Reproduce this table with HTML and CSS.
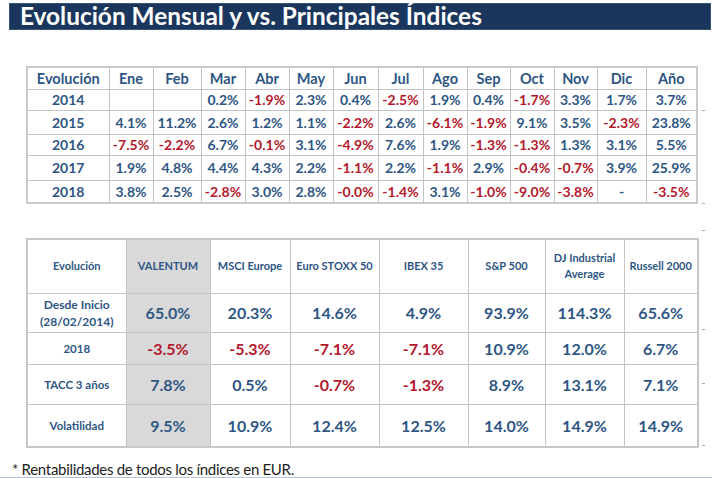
FILE: index.html
```html
<!DOCTYPE html>
<html lang="es">
<head>
<meta charset="utf-8">
<title>Evolución Mensual y vs. Principales Índices</title>
<link rel="stylesheet" href="styles.css">
</head>
<body>
<div class="page">
  <div class="title-bar"><h1 class="title">Evolución Mensual y vs. Principales Índices</h1></div>

  <table class="monthly">
    <colgroup>
      <col class="c-label"><col class="c44"><col class="c48"><col class="c44"><col class="c44"><col class="c44"><col class="c45"><col class="c45"><col class="c44"><col class="c43"><col class="c44"><col class="c43"><col class="c49"><col class="c50">
    </colgroup>
    <thead>
      <tr class="r-h"><th>Evolución</th><th>Ene</th><th>Feb</th><th>Mar</th><th>Abr</th><th>May</th><th>Jun</th><th>Jul</th><th>Ago</th><th>Sep</th><th>Oct</th><th>Nov</th><th>Dic</th><th>Año</th></tr>
    </thead>
    <tbody>
      <tr class="r1"><th>2014</th><td></td><td></td><td>0.2%</td><td class="neg">-1.9%</td><td>2.3%</td><td>0.4%</td><td class="neg">-2.5%</td><td>1.9%</td><td>0.4%</td><td class="neg">-1.7%</td><td>3.3%</td><td>1.7%</td><td>3.7%</td></tr>
      <tr class="r2"><th>2015</th><td>4.1%</td><td>11.2%</td><td>2.6%</td><td>1.2%</td><td>1.1%</td><td class="neg">-2.2%</td><td>2.6%</td><td class="neg">-6.1%</td><td class="neg">-1.9%</td><td>9.1%</td><td>3.5%</td><td class="neg">-2.3%</td><td>23.8%</td></tr>
      <tr class="r3"><th>2016</th><td class="neg">-7.5%</td><td class="neg">-2.2%</td><td>6.7%</td><td class="neg">-0.1%</td><td>3.1%</td><td class="neg">-4.9%</td><td>7.6%</td><td>1.9%</td><td class="neg">-1.3%</td><td class="neg">-1.3%</td><td>1.3%</td><td>3.1%</td><td>5.5%</td></tr>
      <tr class="r4"><th>2017</th><td>1.9%</td><td>4.8%</td><td>4.4%</td><td>4.3%</td><td>2.2%</td><td class="neg">-1.1%</td><td>2.2%</td><td class="neg">-1.1%</td><td>2.9%</td><td class="neg">-0.4%</td><td class="neg">-0.7%</td><td>3.9%</td><td>25.9%</td></tr>
      <tr class="r5"><th>2018</th><td>3.8%</td><td>2.5%</td><td class="neg">-2.8%</td><td>3.0%</td><td>2.8%</td><td class="neg">-0.0%</td><td class="neg">-1.4%</td><td>3.1%</td><td class="neg">-1.0%</td><td class="neg">-9.0%</td><td class="neg">-3.8%</td><td>-</td><td class="neg">-3.5%</td></tr>
    </tbody>
  </table>

  <table class="compare">
    <colgroup>
      <col class="k-label"><col class="k-val"><col class="k-msci"><col class="k-stoxx"><col class="k-ibex"><col class="k-sp"><col class="k-dj"><col class="k-rus">
    </colgroup>
    <thead>
      <tr class="s-h"><th>Evolución</th><th class="hl">VALENTUM</th><th>MSCI Europe</th><th>Euro STOXX 50</th><th>IBEX 35</th><th>S&amp;P 500</th><th>DJ Industrial<br>Average</th><th>Russell 2000</th></tr>
    </thead>
    <tbody>
      <tr class="s1"><th class="lbl-big">Desde Inicio<br>(28/02/2014)</th><td class="hl">65.0%</td><td>20.3%</td><td>14.6%</td><td>4.9%</td><td>93.9%</td><td>114.3%</td><td>65.6%</td></tr>
      <tr class="s2"><th>2018</th><td class="hl neg">-3.5%</td><td class="neg">-5.3%</td><td class="neg">-7.1%</td><td class="neg">-7.1%</td><td>10.9%</td><td>12.0%</td><td>6.7%</td></tr>
      <tr class="s3"><th>TACC 3 años</th><td class="hl">7.8%</td><td>0.5%</td><td class="neg">-0.7%</td><td class="neg">-1.3%</td><td>8.9%</td><td>13.1%</td><td>7.1%</td></tr>
      <tr class="s4"><th>Volatilidad</th><td class="hl">9.5%</td><td>10.9%</td><td>12.4%</td><td>12.5%</td><td>14.0%</td><td>14.9%</td><td>14.9%</td></tr>
    </tbody>
  </table>

  <p class="note">* Rentabilidades de todos los índices en EUR.</p>

  <span class="tick t1"></span>
  <span class="tick t2"></span>
  <span class="tick t3"></span>
  <span class="tick t4"></span>
  <span class="tick t5"></span>
  <span class="tick t6"></span>
</div>
</body>
</html>
```

FILE: styles.css
```css
html, body {
  margin: 0;
  padding: 0;
  background: #ffffff;
}

body {
  font-family: Lato, "Open Sans", "Liberation Sans", sans-serif;
  width: 712px;
  height: 478px;
  overflow: hidden;
}

.page {
  position: relative;
  display: flex;
  flex-direction: column;
  align-items: flex-start;
  padding-top: 3px;
  height: 474px;
  border-bottom: 1px solid #b9c4d6;
}

.title-bar {
  margin-left: 9px;
  width: 702px;
  height: 31px;
  box-sizing: border-box;
  background: #1b365c;
  border: 1px solid #3a5478;
  display: flex;
  align-items: center;
  padding-left: 10px;
}

.title {
  margin: 0;
  color: #ffffff;
  font-family: Lato, "Open Sans", sans-serif;
  font-weight: 700;
  font-size: 24.4px;
  line-height: 1;
}

/* ---- monthly table ---- */
.monthly {
  margin-top: 36px;
  margin-left: 26px;
  width: 671px;
  table-layout: fixed;
  border-collapse: collapse;
  border: 2px solid #cacaca;
}

.monthly th,
.monthly td {
  border: 1px solid #c4c4c4;
  padding: 0;
  text-align: center;
  font-weight: 700;
  font-size: 14px;
  color: #2e5684;
  white-space: nowrap;
}

.monthly thead th { font-size: 14.5px; }

.c-label { width: 82px; }
.c43 { width: 43px; }
.c44 { width: 44px; }
.c45 { width: 45px; }
.c48 { width: 48px; }
.c49 { width: 49px; }
.c50 { width: 51px; }

.r-h { height: 22px; }
.r1 { height: 21px; }
.r2 { height: 24px; }
.r3 { height: 21px; }
.r4 { height: 25px; }
.r5 { height: 23px; }

.neg { color: #b3182c !important; }

/* ---- comparison table ---- */
.compare {
  margin-top: 34px;
  margin-left: 26px;
  width: 671px;
  table-layout: fixed;
  border-collapse: collapse;
  border: 2px solid #c8c8c8;
}

.compare th,
.compare td {
  border: 1px solid #c4c4c4;
  padding: 0;
  text-align: center;
  color: #2e5684;
  font-weight: 700;
}

.compare thead th {
  font-size: 11px;
  line-height: 16px;
}

.compare tbody th {
  font-size: 11.5px;
  line-height: 17px;
}

.compare tbody th.lbl-big {
  font-size: 12px;
}

.compare td {
  font-size: 16px;
}

.compare .hl {
  background: #d9d9d9;
}

.k-label { width: 99px; }
.k-val { width: 84px; }
.k-msci { width: 80px; }
.k-stoxx { width: 89px; }
.k-ibex { width: 89px; }
.k-sp { width: 77px; }
.k-dj { width: 79px; }
.k-rus { width: 74px; }

.s-h { height: 54px; }
.s1 { height: 39px; }
.s2 { height: 32px; }
.s3 { height: 40px; }
.s4 { height: 43px; }

.note {
  margin: 13px 0 0 12px;
  font-family: Lato, "Open Sans", sans-serif;
  font-size: 15px;
  letter-spacing: -0.3px;
  color: #1e1e1e;
  line-height: 16px;
}

/* small decorative tick marks at the right edge of the slide */
.tick {
  position: absolute;
  left: 702px;
  width: 3px;
  height: 1px;
  background: #a8a8a8;
}
.t1 { top: 110px; }
.t2 { top: 203px; }
.t3 { top: 230px; }
.t4 { top: 329px; }
.t5 { top: 383px; }
.t6 { top: 445px; }
```
